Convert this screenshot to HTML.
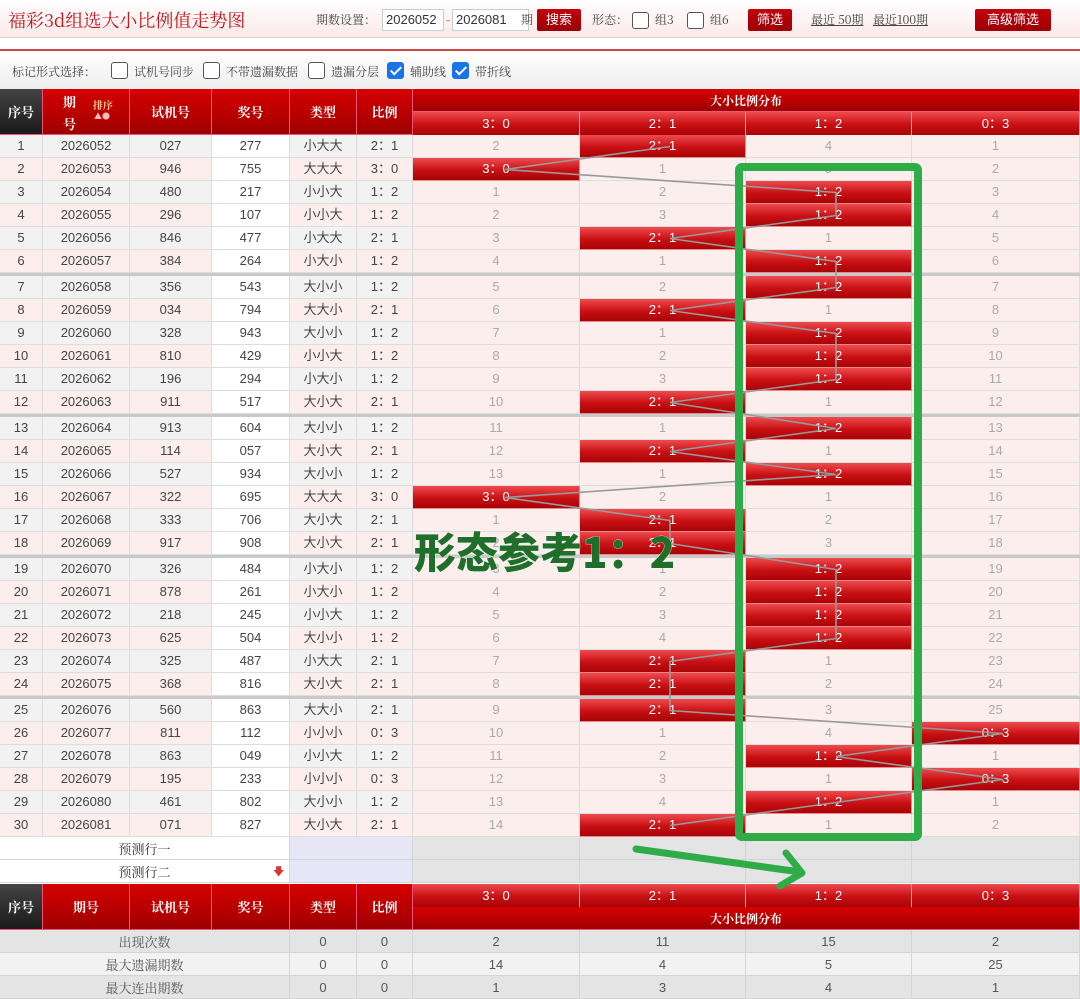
<!DOCTYPE html>
<html><head><meta charset="utf-8">
<style>
*{box-sizing:border-box;margin:0;padding:0}
body{width:1080px;height:998px;overflow:hidden;background:#fff;font-family:"Liberation Sans","Noto Sans CJK SC",sans-serif;font-size:13px;color:#333;position:relative}
.top{position:absolute;left:0;top:0;width:1080px;height:38px;background:linear-gradient(#fff,#fbe9e9);border-bottom:1px solid #e9cfcf}
.title{position:absolute;left:8px;top:7px;font-family:"Noto Serif CJK SC",serif;font-size:18px;color:#c3161c}
.t{position:absolute;font-family:"Noto Serif CJK SC",serif;font-size:12px;color:#444}
.inp{position:absolute;top:9px;height:22px;border:1px solid #ccc;background:#fff;font-size:13px;padding:2px 3px;color:#333}
.btn{position:absolute;top:9px;height:22px;background:linear-gradient(#c4000a,#9a0006);color:#fff;font-size:13px;text-align:center;line-height:22px;border-radius:2px}
.cb{position:absolute;width:17px;height:17px;border:1px solid #555;border-radius:3px;background:#fff}
.cb.on{background:#1a73e8;border-color:#1a73e8}
.cb.on:after{content:"";position:absolute;left:5px;top:1px;width:4px;height:9px;border:solid #fff;border-width:0 2px 2px 0;transform:rotate(45deg)}
.redline{position:absolute;left:0;top:49px;width:1080px;height:2px;background:#c44}
.opt{position:absolute;left:0;top:51px;width:1080px;height:38px;background:linear-gradient(#fff,#eee)}
.r{position:absolute;left:0;width:1080px;height:23px;display:flex}
.r div{height:23px;border-right:1px solid #ddd;border-bottom:1px solid #ddd;text-align:center;line-height:22px;font-size:13px;color:#444}
.w0{width:43px}.w1{width:87px}.w2{width:82px}.w3{width:78px}.w4{width:67px}.w5{width:56px}.w6{width:167px}.w7{width:166px}.w8{width:166px}.w9{width:168px}
.o div{background:#f2f2f2}.e div{background:#fdeeee}
.r div.k{background:#fff}
.r div.m{background:#fdeeee;color:#aaa}
.r div.h{background:linear-gradient(#ee4b4f,#c81013 55%,#a80408);color:#fff;border-color:#e88}
.sep{position:absolute;left:0;width:1080px;height:3px;background:#c9c9c9}
.hd{position:absolute;color:#fff;text-align:center;font-family:"Noto Serif CJK SC",serif;font-weight:bold;font-size:13px;background:linear-gradient(#d60000,#b00000 70%,#9a0000);border-right:1px solid #e57;border-bottom:1px solid #e57}
.hd.dk{background:linear-gradient(#444,#1a1a1a)}
.hs{position:absolute;color:#fff;text-align:center;font-size:13px;background:linear-gradient(#ee4b4f,#c81013 55%,#a80408);border-right:1px solid #f99;height:23px;line-height:23px}
.g{position:absolute;height:23px;line-height:23px;text-align:center;font-size:13px;color:#555;border-right:1px solid #d4d4d4;border-bottom:1px solid #d4d4d4}
.ser{font-family:"Noto Serif CJK SC",serif}
</style></head><body>
<div class="top">
<div class="title">福彩3d组选大小比例值走势图</div>
<div class="t" style="left:316px;top:11px">期数设置：</div>
<div class="inp" style="left:382px;width:62px">2026052</div>
<div class="t" style="left:446px;top:11px">-</div>
<div class="inp" style="left:452px;width:77px">2026081</div>
<div class="t" style="left:521px;top:11px">期</div>
<div class="btn" style="left:537px;width:44px">搜索</div>
<div class="t" style="left:592px;top:11px">形态：</div>
<div class="cb" style="left:632px;top:12px"></div><div class="t" style="left:655px;top:11px">组3</div>
<div class="cb" style="left:687px;top:12px"></div><div class="t" style="left:710px;top:11px">组6</div>
<div class="btn" style="left:748px;width:44px">筛选</div>
<div class="t" style="left:811px;top:11px;text-decoration:underline">最近 50期</div>
<div class="t" style="left:873px;top:11px;text-decoration:underline">最近100期</div>
<div class="btn" style="left:975px;width:76px">高级筛选</div>
</div>
<div class="redline"></div>
<div class="opt">
<div class="t" style="left:12px;top:12px">标记形式选择：</div>
<div class="cb" style="left:111px;top:11px"></div><div class="t" style="left:134px;top:12px">试机号同步</div>
<div class="cb" style="left:203px;top:11px"></div><div class="t" style="left:226px;top:12px">不带遗漏数据</div>
<div class="cb" style="left:308px;top:11px"></div><div class="t" style="left:331px;top:12px">遗漏分层</div>
<div class="cb on" style="left:387px;top:11px"></div><div class="t" style="left:410px;top:12px">辅助线</div>
<div class="cb on" style="left:452px;top:11px"></div><div class="t" style="left:475px;top:12px">带折线</div>
</div>

<div class="hd dk" style="left:0;top:89px;width:43px;height:46px;line-height:46px">序号</div>
<div class="hd" style="left:43px;top:89px;width:87px;height:46px"><span style="position:absolute;left:20px;top:3px">期</span><span style="position:absolute;left:20px;top:25px">号</span><span style="position:absolute;left:50px;top:8px;font-size:10px;color:#ffd0a0">排序</span><span style="position:absolute;left:51px;top:22px;font-size:8px;color:#fbb">▲●</span></div>
<div class="hd" style="left:130px;top:89px;width:82px;height:46px;line-height:46px">试机号</div>
<div class="hd" style="left:212px;top:89px;width:78px;height:46px;line-height:46px">奖号</div>
<div class="hd" style="left:290px;top:89px;width:67px;height:46px;line-height:46px">类型</div>
<div class="hd" style="left:357px;top:89px;width:56px;height:46px;line-height:46px">比例</div>
<div class="hd" style="left:413px;top:89px;width:667px;height:23px;line-height:23px;font-size:12px">大小比例分布</div>
<div class="hs" style="left:413px;top:112px;width:167px">3：0</div>
<div class="hs" style="left:580px;top:112px;width:166px">2：1</div>
<div class="hs" style="left:746px;top:112px;width:166px">1：2</div>
<div class="hs" style="left:912px;top:112px;width:168px">0：3</div>

<div class="r o" style="top:135px"><div class="w0">1</div><div class="w1">2026052</div><div class="w2">027</div><div class="w3 k">277</div><div class="w4">小大大</div><div class="w5">2：1</div><div class="w6 m">2</div><div class="w7 h">2：1</div><div class="w8 m">4</div><div class="w9 m">1</div></div>
<div class="r e" style="top:158px"><div class="w0">2</div><div class="w1">2026053</div><div class="w2">946</div><div class="w3 k">755</div><div class="w4">大大大</div><div class="w5">3：0</div><div class="w6 h">3：0</div><div class="w7 m">1</div><div class="w8 m">5</div><div class="w9 m">2</div></div>
<div class="r o" style="top:181px"><div class="w0">3</div><div class="w1">2026054</div><div class="w2">480</div><div class="w3 k">217</div><div class="w4">小小大</div><div class="w5">1：2</div><div class="w6 m">1</div><div class="w7 m">2</div><div class="w8 h">1：2</div><div class="w9 m">3</div></div>
<div class="r e" style="top:204px"><div class="w0">4</div><div class="w1">2026055</div><div class="w2">296</div><div class="w3 k">107</div><div class="w4">小小大</div><div class="w5">1：2</div><div class="w6 m">2</div><div class="w7 m">3</div><div class="w8 h">1：2</div><div class="w9 m">4</div></div>
<div class="r o" style="top:227px"><div class="w0">5</div><div class="w1">2026056</div><div class="w2">846</div><div class="w3 k">477</div><div class="w4">小大大</div><div class="w5">2：1</div><div class="w6 m">3</div><div class="w7 h">2：1</div><div class="w8 m">1</div><div class="w9 m">5</div></div>
<div class="r e" style="top:250px"><div class="w0">6</div><div class="w1">2026057</div><div class="w2">384</div><div class="w3 k">264</div><div class="w4">小大小</div><div class="w5">1：2</div><div class="w6 m">4</div><div class="w7 m">1</div><div class="w8 h">1：2</div><div class="w9 m">6</div></div>
<div class="sep" style="top:273px"></div>
<div class="r o" style="top:276px"><div class="w0">7</div><div class="w1">2026058</div><div class="w2">356</div><div class="w3 k">543</div><div class="w4">大小小</div><div class="w5">1：2</div><div class="w6 m">5</div><div class="w7 m">2</div><div class="w8 h">1：2</div><div class="w9 m">7</div></div>
<div class="r e" style="top:299px"><div class="w0">8</div><div class="w1">2026059</div><div class="w2">034</div><div class="w3 k">794</div><div class="w4">大大小</div><div class="w5">2：1</div><div class="w6 m">6</div><div class="w7 h">2：1</div><div class="w8 m">1</div><div class="w9 m">8</div></div>
<div class="r o" style="top:322px"><div class="w0">9</div><div class="w1">2026060</div><div class="w2">328</div><div class="w3 k">943</div><div class="w4">大小小</div><div class="w5">1：2</div><div class="w6 m">7</div><div class="w7 m">1</div><div class="w8 h">1：2</div><div class="w9 m">9</div></div>
<div class="r e" style="top:345px"><div class="w0">10</div><div class="w1">2026061</div><div class="w2">810</div><div class="w3 k">429</div><div class="w4">小小大</div><div class="w5">1：2</div><div class="w6 m">8</div><div class="w7 m">2</div><div class="w8 h">1：2</div><div class="w9 m">10</div></div>
<div class="r o" style="top:368px"><div class="w0">11</div><div class="w1">2026062</div><div class="w2">196</div><div class="w3 k">294</div><div class="w4">小大小</div><div class="w5">1：2</div><div class="w6 m">9</div><div class="w7 m">3</div><div class="w8 h">1：2</div><div class="w9 m">11</div></div>
<div class="r e" style="top:391px"><div class="w0">12</div><div class="w1">2026063</div><div class="w2">911</div><div class="w3 k">517</div><div class="w4">大小大</div><div class="w5">2：1</div><div class="w6 m">10</div><div class="w7 h">2：1</div><div class="w8 m">1</div><div class="w9 m">12</div></div>
<div class="sep" style="top:414px"></div>
<div class="r o" style="top:417px"><div class="w0">13</div><div class="w1">2026064</div><div class="w2">913</div><div class="w3 k">604</div><div class="w4">大小小</div><div class="w5">1：2</div><div class="w6 m">11</div><div class="w7 m">1</div><div class="w8 h">1：2</div><div class="w9 m">13</div></div>
<div class="r e" style="top:440px"><div class="w0">14</div><div class="w1">2026065</div><div class="w2">114</div><div class="w3 k">057</div><div class="w4">大小大</div><div class="w5">2：1</div><div class="w6 m">12</div><div class="w7 h">2：1</div><div class="w8 m">1</div><div class="w9 m">14</div></div>
<div class="r o" style="top:463px"><div class="w0">15</div><div class="w1">2026066</div><div class="w2">527</div><div class="w3 k">934</div><div class="w4">大小小</div><div class="w5">1：2</div><div class="w6 m">13</div><div class="w7 m">1</div><div class="w8 h">1：2</div><div class="w9 m">15</div></div>
<div class="r e" style="top:486px"><div class="w0">16</div><div class="w1">2026067</div><div class="w2">322</div><div class="w3 k">695</div><div class="w4">大大大</div><div class="w5">3：0</div><div class="w6 h">3：0</div><div class="w7 m">2</div><div class="w8 m">1</div><div class="w9 m">16</div></div>
<div class="r o" style="top:509px"><div class="w0">17</div><div class="w1">2026068</div><div class="w2">333</div><div class="w3 k">706</div><div class="w4">大小大</div><div class="w5">2：1</div><div class="w6 m">1</div><div class="w7 h">2：1</div><div class="w8 m">2</div><div class="w9 m">17</div></div>
<div class="r e" style="top:532px"><div class="w0">18</div><div class="w1">2026069</div><div class="w2">917</div><div class="w3 k">908</div><div class="w4">大小大</div><div class="w5">2：1</div><div class="w6 m">2</div><div class="w7 h">2：1</div><div class="w8 m">3</div><div class="w9 m">18</div></div>
<div class="sep" style="top:555px"></div>
<div class="r o" style="top:558px"><div class="w0">19</div><div class="w1">2026070</div><div class="w2">326</div><div class="w3 k">484</div><div class="w4">小大小</div><div class="w5">1：2</div><div class="w6 m">3</div><div class="w7 m">1</div><div class="w8 h">1：2</div><div class="w9 m">19</div></div>
<div class="r e" style="top:581px"><div class="w0">20</div><div class="w1">2026071</div><div class="w2">878</div><div class="w3 k">261</div><div class="w4">小大小</div><div class="w5">1：2</div><div class="w6 m">4</div><div class="w7 m">2</div><div class="w8 h">1：2</div><div class="w9 m">20</div></div>
<div class="r o" style="top:604px"><div class="w0">21</div><div class="w1">2026072</div><div class="w2">218</div><div class="w3 k">245</div><div class="w4">小小大</div><div class="w5">1：2</div><div class="w6 m">5</div><div class="w7 m">3</div><div class="w8 h">1：2</div><div class="w9 m">21</div></div>
<div class="r e" style="top:627px"><div class="w0">22</div><div class="w1">2026073</div><div class="w2">625</div><div class="w3 k">504</div><div class="w4">大小小</div><div class="w5">1：2</div><div class="w6 m">6</div><div class="w7 m">4</div><div class="w8 h">1：2</div><div class="w9 m">22</div></div>
<div class="r o" style="top:650px"><div class="w0">23</div><div class="w1">2026074</div><div class="w2">325</div><div class="w3 k">487</div><div class="w4">小大大</div><div class="w5">2：1</div><div class="w6 m">7</div><div class="w7 h">2：1</div><div class="w8 m">1</div><div class="w9 m">23</div></div>
<div class="r e" style="top:673px"><div class="w0">24</div><div class="w1">2026075</div><div class="w2">368</div><div class="w3 k">816</div><div class="w4">大小大</div><div class="w5">2：1</div><div class="w6 m">8</div><div class="w7 h">2：1</div><div class="w8 m">2</div><div class="w9 m">24</div></div>
<div class="sep" style="top:696px"></div>
<div class="r o" style="top:699px"><div class="w0">25</div><div class="w1">2026076</div><div class="w2">560</div><div class="w3 k">863</div><div class="w4">大大小</div><div class="w5">2：1</div><div class="w6 m">9</div><div class="w7 h">2：1</div><div class="w8 m">3</div><div class="w9 m">25</div></div>
<div class="r e" style="top:722px"><div class="w0">26</div><div class="w1">2026077</div><div class="w2">811</div><div class="w3 k">112</div><div class="w4">小小小</div><div class="w5">0：3</div><div class="w6 m">10</div><div class="w7 m">1</div><div class="w8 m">4</div><div class="w9 h">0：3</div></div>
<div class="r o" style="top:745px"><div class="w0">27</div><div class="w1">2026078</div><div class="w2">863</div><div class="w3 k">049</div><div class="w4">小小大</div><div class="w5">1：2</div><div class="w6 m">11</div><div class="w7 m">2</div><div class="w8 h">1：2</div><div class="w9 m">1</div></div>
<div class="r e" style="top:768px"><div class="w0">28</div><div class="w1">2026079</div><div class="w2">195</div><div class="w3 k">233</div><div class="w4">小小小</div><div class="w5">0：3</div><div class="w6 m">12</div><div class="w7 m">3</div><div class="w8 m">1</div><div class="w9 h">0：3</div></div>
<div class="r o" style="top:791px"><div class="w0">29</div><div class="w1">2026080</div><div class="w2">461</div><div class="w3 k">802</div><div class="w4">大小小</div><div class="w5">1：2</div><div class="w6 m">13</div><div class="w7 m">4</div><div class="w8 h">1：2</div><div class="w9 m">1</div></div>
<div class="r e" style="top:814px"><div class="w0">30</div><div class="w1">2026081</div><div class="w2">071</div><div class="w3 k">827</div><div class="w4">大小大</div><div class="w5">2：1</div><div class="w6 m">14</div><div class="w7 h">2：1</div><div class="w8 m">1</div><div class="w9 m">2</div></div>

<div class="g ser" style="left:0;top:837px;width:290px;background:#fff;color:#333">预测行一</div>
<div class="g" style="left:290px;top:837px;width:123px;background:#e6e6f6"></div>
<div class="g" style="left:413px;top:837px;width:167px;background:#e4e4e4"></div><div class="g" style="left:580px;top:837px;width:166px;background:#e4e4e4"></div><div class="g" style="left:746px;top:837px;width:166px;background:#e4e4e4"></div><div class="g" style="left:912px;top:837px;width:168px;background:#e4e4e4"></div>
<div class="g ser" style="left:0;top:860px;width:290px;background:#fff;color:#333">预测行二<span style="position:absolute;left:273px;color:#d33;font-size:11px">🡇</span></div>
<div class="g" style="left:290px;top:860px;width:123px;background:#e6e6f6"></div>
<div class="g" style="left:413px;top:860px;width:167px;background:#e4e4e4"></div><div class="g" style="left:580px;top:860px;width:166px;background:#e4e4e4"></div><div class="g" style="left:746px;top:860px;width:166px;background:#e4e4e4"></div><div class="g" style="left:912px;top:860px;width:168px;background:#e4e4e4"></div>

<div class="hd dk" style="left:0;top:884px;width:43px;height:46px;line-height:46px">序号</div>
<div class="hd" style="left:43px;top:884px;width:87px;height:46px;line-height:46px">期号</div>
<div class="hd" style="left:130px;top:884px;width:82px;height:46px;line-height:46px">试机号</div>
<div class="hd" style="left:212px;top:884px;width:78px;height:46px;line-height:46px">奖号</div>
<div class="hd" style="left:290px;top:884px;width:67px;height:46px;line-height:46px">类型</div>
<div class="hd" style="left:357px;top:884px;width:56px;height:46px;line-height:46px">比例</div>
<div class="hs" style="left:413px;top:884px;width:167px">3：0</div>
<div class="hs" style="left:580px;top:884px;width:166px">2：1</div>
<div class="hs" style="left:746px;top:884px;width:166px">1：2</div>
<div class="hs" style="left:912px;top:884px;width:168px">0：3</div>
<div class="hd" style="left:413px;top:907px;width:667px;height:23px;line-height:23px;font-size:12px">大小比例分布</div>

<div class="g ser" style="left:0;top:930px;width:290px;background:#e4e4e4">出现次数</div><div class="g" style="left:290px;top:930px;width:67px;background:#e4e4e4">0</div><div class="g" style="left:357px;top:930px;width:56px;background:#e4e4e4">0</div><div class="g" style="left:413px;top:930px;width:167px;background:#e4e4e4">2</div><div class="g" style="left:580px;top:930px;width:166px;background:#e4e4e4">11</div><div class="g" style="left:746px;top:930px;width:166px;background:#e4e4e4">15</div><div class="g" style="left:912px;top:930px;width:168px;background:#e4e4e4">2</div>
<div class="g ser" style="left:0;top:953px;width:290px;background:#f2f2f2">最大遗漏期数</div><div class="g" style="left:290px;top:953px;width:67px;background:#f2f2f2">0</div><div class="g" style="left:357px;top:953px;width:56px;background:#f2f2f2">0</div><div class="g" style="left:413px;top:953px;width:167px;background:#f2f2f2">14</div><div class="g" style="left:580px;top:953px;width:166px;background:#f2f2f2">4</div><div class="g" style="left:746px;top:953px;width:166px;background:#f2f2f2">5</div><div class="g" style="left:912px;top:953px;width:168px;background:#f2f2f2">25</div>
<div class="g ser" style="left:0;top:976px;width:290px;background:#e4e4e4">最大连出期数</div><div class="g" style="left:290px;top:976px;width:67px;background:#e4e4e4">0</div><div class="g" style="left:357px;top:976px;width:56px;background:#e4e4e4">0</div><div class="g" style="left:413px;top:976px;width:167px;background:#e4e4e4">1</div><div class="g" style="left:580px;top:976px;width:166px;background:#e4e4e4">3</div><div class="g" style="left:746px;top:976px;width:166px;background:#e4e4e4">4</div><div class="g" style="left:912px;top:976px;width:168px;background:#e4e4e4">1</div>

<svg width="1080" height="998" style="position:absolute;left:0;top:0" xmlns="http://www.w3.org/2000/svg">
<polyline fill="none" stroke="#999" stroke-width="1.6" points="670,146.5 505,169.5 836,192.5 836,215.5 670,238.5 836,261.5 836,287.5 670,310.5 836,333.5 836,356.5 836,379.5 670,402.5 836,428.5 670,451.5 836,474.5 505,497.5 670,520.5 670,543.5 836,569.5 836,592.5 836,615.5 836,638.5 670,661.5 670,684.5 670,710.5 1003,733.5 836,756.5 1003,779.5 836,802.5 670,825.5"/>
<rect x="739" y="167" width="179" height="670" rx="3" fill="none" stroke="#2eac48" stroke-width="8"/>
<path d="M636,849 L800,872 M786,853 L802,873 L780,886" fill="none" stroke="#2eac48" stroke-width="7" stroke-linecap="round" stroke-linejoin="round"/>
<text x="414" y="568" font-family="Noto Sans CJK SC, sans-serif" font-weight="900" font-size="42" fill="#1f6e2a" stroke="#fff" stroke-width="0.6" paint-order="stroke">形态参考1：2</text>
</svg>
</body></html>
